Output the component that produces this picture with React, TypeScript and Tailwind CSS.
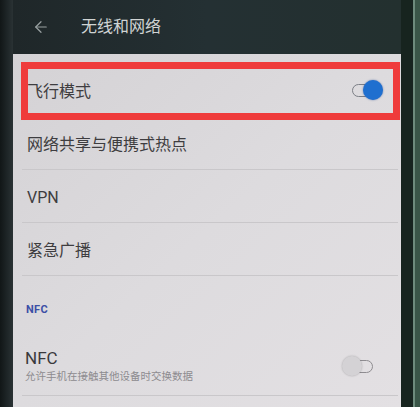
import { ArrowLeft } from "lucide-react";

const font = { fontFamily: 'Roboto, "Noto Sans CJK SC", sans-serif' };

/* Toggle drawn like the old Android switch: outlined track + round knob */
const Toggle = ({ on }: { on: boolean }) => {
  return (
    <div className="relative w-[31px] h-[20px]">
      <div
        className={`absolute top-[4px] h-[13px] w-[20px] rounded-full border-[1.5px] ${
          on ? "left-0 border-[#7c7f86]" : "right-0 border-[#8e8c90]"
        }`}
      />
      <div
        className={`absolute top-0 h-[20px] w-[20px] rounded-full ${
          on
            ? "right-0 bg-[#1f6fcf] shadow-[0_0_2px_rgba(20,60,140,0.6)]"
            : "left-0 bg-[#d4d2d5] shadow-[0_0_2px_rgba(0,0,0,0.25)]"
        }`}
      />
    </div>
  );
};

const Row = ({ title, right }: { title: string; right?: any }) => {
  return (
    <div className="h-[53px] flex items-center pl-[5px] pr-[15px] border-b border-[#c9c7ca]">
      <div className="flex-1 pt-[4px] text-[16px] text-[#3e3d40] leading-none">{title}</div>
      {right}
    </div>
  );
};

export default function App() {
  return (
    <div className="w-[420px] h-[407px] flex overflow-hidden bg-[#1a2022]" style={font}>
      {/* left bezel */}
      <div className="w-[13px] h-full bg-linear-to-r from-[#111617] via-[#1d2426] to-[#2a3234]" />

      <div className="w-[388px] h-full flex flex-col">
        {/* header */}
        <div className="h-[54px] flex items-center bg-linear-to-r from-[#1f2729] via-[#243033] to-[#23302f]">
          <ArrowLeft size={18} strokeWidth={1.6} className="ml-[19px] text-[#9aa1a2]" />
          <div className="ml-[31px] text-[16px] text-[#d0d4d4] leading-none">无线和网络</div>
        </div>

        {/* settings panel */}
        <div className="relative flex-1 pt-[10px] bg-linear-to-br from-[#d4d2d5] via-[#dddbde] to-[#e3e0e3]">
          <div className="ml-[9px] mr-[3px]">
            <Row title="飞行模式" right={<Toggle on />} />
            <Row title="网络共享与便携式热点" />
            <Row title="VPN" />
            <Row title="紧急广播" />
          </div>

          <div className="h-[61px] flex items-center pl-[13px] pt-[6px]">
            <div className="text-[11px] font-bold text-[#3c4fa6] leading-none tracking-[0.3px]">NFC</div>
          </div>

          <div className="ml-[9px] mr-[3px] h-[59px] flex items-center pl-[3px] pr-[25px] border-b border-[#c9c7ca]">
            <div className="flex-1">
              <div className="text-[17px] text-[#3a393c] leading-none">NFC</div>
              <div className="mt-[5px] text-[10.5px] text-[#8d8b8f] leading-none">
                允许手机在接触其他设备时交换数据
              </div>
            </div>
            <Toggle on={false} />
          </div>

          {/* red highlight annotation */}
          <div className="absolute left-[8px] top-[8px] w-[379px] h-[58px] border-[7px] border-[#ef3b3b]" />
        </div>
      </div>

      {/* right bezel */}
      <div className="w-[19px] h-full flex">
        <div className="w-[12px] h-full bg-[#17241f]" />
        <div className="w-[2px] h-full bg-[#6d8b7c]" />
        <div className="w-[5px] h-full bg-[#3a5648]" />
      </div>
    </div>
  );
}
